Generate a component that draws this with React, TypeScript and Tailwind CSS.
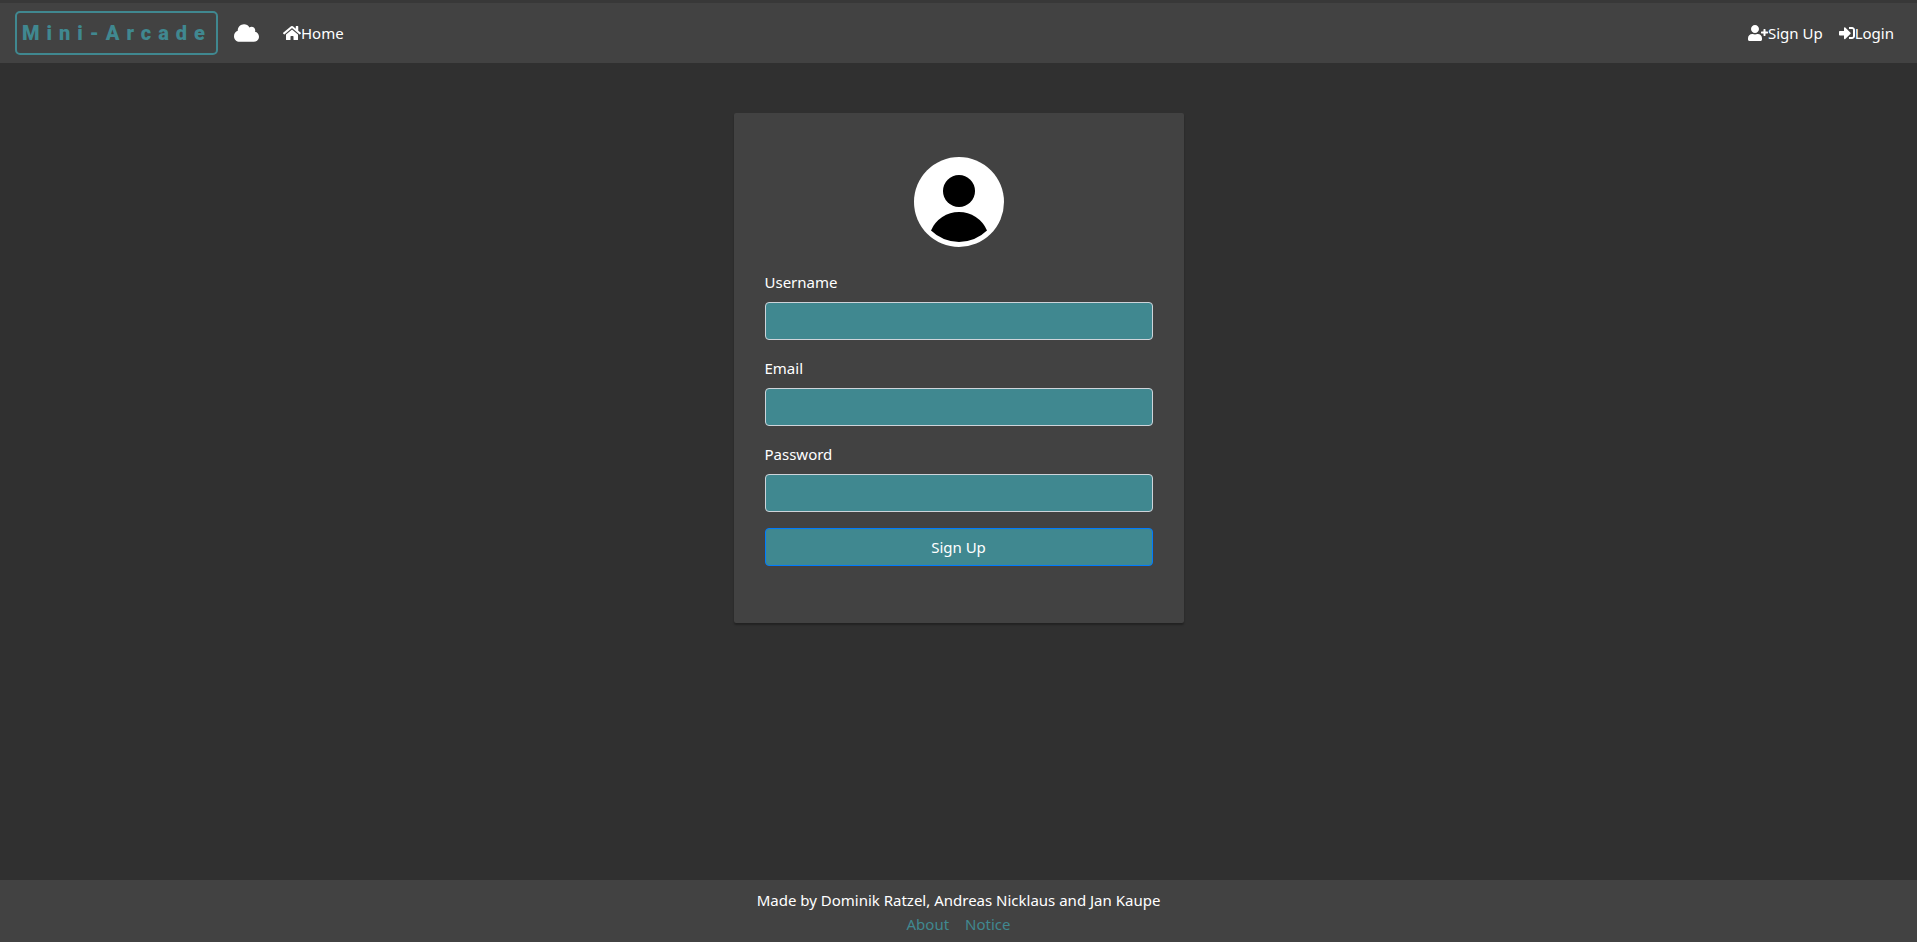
import type { ReactNode } from "react";
import { FaCloud, FaHome, FaSignInAlt, FaUserPlus } from "react-icons/fa";

const fields = [
  { id: "username", label: "Username", type: "text" },
  { id: "email", label: "Email", type: "email" },
  { id: "password", label: "Password", type: "password" },
];

function NavLink({ href, children }: { href: string; children: ReactNode }) {
  return (
    <a href={href} className="flex items-center p-2 text-white">
      {children}
    </a>
  );
}

function Navbar() {
  return (
    <nav className="flex items-center justify-between border-t-3 border-[#383838] bg-[#424242] px-[15px] py-2">
      <div className="flex items-center">
        <a
          href="#home"
          className="mr-4 flex h-11 items-center rounded-[5px] border-2 border-[#408890] pr-1 pl-[5px] font-[Impact,Roboto,sans-serif] text-xl font-black tracking-[7px] text-[#408890]"
        >
          Mini-Arcade
        </a>
        <FaCloud className="mr-4 h-5 w-[25px] text-white" aria-hidden="true" />
        <NavLink href="#home">
          <FaHome className="h-4 w-[18px]" aria-hidden="true" />
          Home
        </NavLink>
      </div>
      <div className="flex items-center">
        <NavLink href="#signup">
          <FaUserPlus className="h-4 w-5" aria-hidden="true" />
          Sign Up
        </NavLink>
        <NavLink href="#login">
          <FaSignInAlt className="size-4" aria-hidden="true" />
          Login
        </NavLink>
      </div>
    </nav>
  );
}

function Avatar() {
  return (
    <svg viewBox="0 0 90 90" className="mx-auto size-[90px]" role="img" aria-label="User">
      <circle cx="45" cy="45" r="45" fill="#fff" />
      <circle cx="45" cy="34" r="16" fill="#000" />
      <path d="M17 73.500 A30.500 30.500 0 0 1 73 73.500 A40 40 0 0 1 17 73.500Z" fill="#000" />
    </svg>
  );
}

export default function App() {
  return (
    <div className="flex min-h-screen flex-col bg-[#303030] font-['Noto_Sans','Open_Sans',sans-serif] text-[15px] leading-6 text-white">
      <Navbar />
      <main className="flex flex-1 flex-col items-center px-4 pt-[50px] pb-12">
        <form
          className="w-full max-w-[450px] rounded-[2px] bg-[#424242] px-[31px] pt-11 pb-[57px] shadow-[0_2px_2px_rgba(0,0,0,0.3)]"
          onSubmit={(event) => event.preventDefault()}
        >
          <Avatar />
          <div className="mt-[23px] flex flex-col gap-4">
            {fields.map((field) => (
              <div key={field.id} className="flex flex-col gap-2">
                <label htmlFor={field.id}>{field.label}</label>
                <input
                  id={field.id}
                  type={field.type}
                  className="h-[38px] w-full rounded border border-[#ced4da] bg-[#408890] px-3"
                />
              </div>
            ))}
            <button type="submit" className="h-[38px] w-full rounded border border-[#007bff] bg-[#408890]">
              Sign Up
            </button>
          </div>
        </form>
      </main>
      <footer className="bg-[#424242] px-4 pt-2 pb-[6px] text-center">
        <p>Made by Dominik Ratzel, Andreas Nicklaus and Jan Kaupe</p>
        <div className="flex justify-center gap-4 text-[#408890]">
          <a href="#about">About</a>
          <a href="#notice">Notice</a>
        </div>
      </footer>
    </div>
  );
}
